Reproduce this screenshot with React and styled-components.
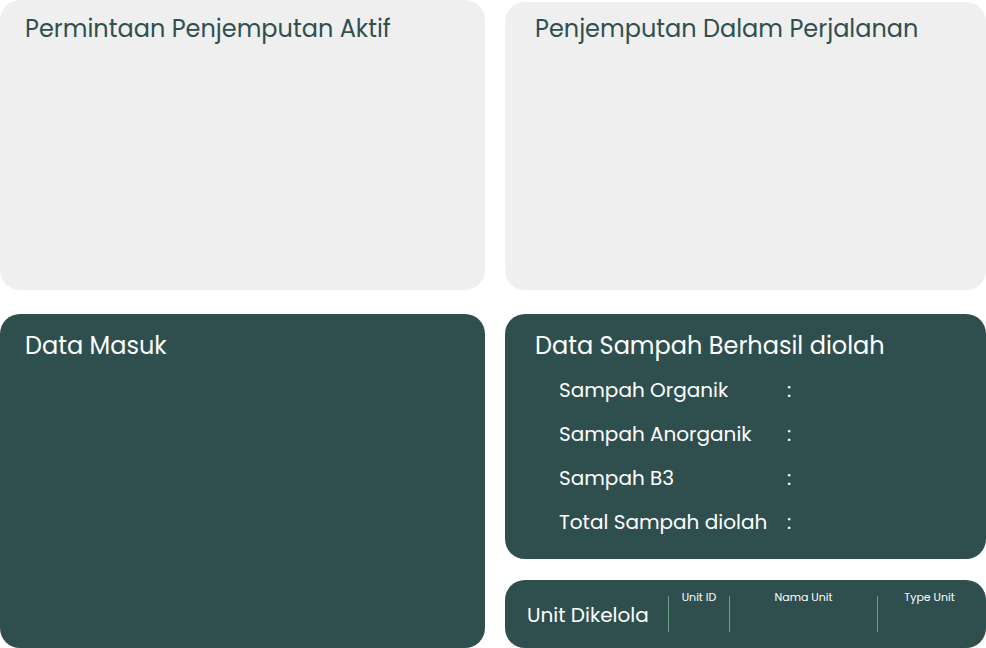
import React from "react";
import styled, { createGlobalStyle } from "styled-components";

const Global = createGlobalStyle`
  html, body { margin: 0; padding: 0; background: #ffffff; }
  body { font-family: "Poppins", "Open Sans", "Noto Sans", sans-serif; overflow: hidden; }
`;

const Page = styled.div`
  display: grid;
  grid-template-columns: 485px 481px;
  grid-template-rows: 290px 334px;
  column-gap: 20px;
  row-gap: 24px;
  width: 986px;
  height: 648px;
`;

const Card = styled.section`
  background: ${(p) => (p.$dark ? "#2f4f4f" : "#efefef")};
  color: ${(p) => (p.$dark ? "#ffffff" : "#2f4f4f")};
  border-radius: 20px;
  box-sizing: border-box;
  padding: ${(p) => p.$pad || "13px 25px"};
  margin-top: ${(p) => p.$mt || "0"};
`;

const Title = styled.h2`
  margin: 0;
  font-size: 24px;
  font-weight: 400;
  line-height: 32px;
`;

const RightStack = styled.div`
  display: flex;
  flex-direction: column;
  gap: 21px;
`;

const SampahCard = styled(Card)`
  height: 245px;
  padding: 16px 30px;
`;

const Rows = styled.div`
  display: grid;
  grid-template-columns: 228px auto;
  row-gap: 14px;
  padding-left: 24px;
  margin-top: 13px;
`;

const Label = styled.span`
  font-size: 20px;
  line-height: 30px;
`;

const UnitCard = styled(Card)`
  height: 68px;
  padding: 0 0 0 22px;
  display: flex;
  align-items: center;
`;

const UnitTitle = styled.span`
  font-size: 20px;
  width: 141px;
  margin-top: 2px;
`;

const ColWrap = styled.div`
  align-self: stretch;
  display: flex;
  padding: 16px 0;
  box-sizing: border-box;
`;

const Col = styled.div`
  width: ${(p) => p.$w}px;
  display: flex;
  justify-content: center;
  box-sizing: border-box;
  border-left: 1px solid #6f9f8c;
  font-size: 11px;
  line-height: 14px;
`;

const ColLabel = styled.span`
  margin-top: -6px;
`;

export default function App() {
  return (
    <>
      <Global />
      <Page>
        <Card>
          <Title>Permintaan Penjemputan Aktif</Title>
        </Card>
        <Card $mt="2px" $pad="11px 30px">
          <Title>Penjemputan Dalam Perjalanan</Title>
        </Card>
        <Card $dark $pad="16px 25px">
          <Title>Data Masuk</Title>
        </Card>
        <RightStack>
          <SampahCard $dark>
            <Title>Data Sampah Berhasil diolah</Title>
            <Rows>
              <Label>Sampah Organik</Label>
              <Label>:</Label>
              <Label>Sampah Anorganik</Label>
              <Label>:</Label>
              <Label>Sampah B3</Label>
              <Label>:</Label>
              <Label>Total Sampah diolah</Label>
              <Label>:</Label>
            </Rows>
          </SampahCard>
          <UnitCard $dark>
            <UnitTitle>Unit Dikelola</UnitTitle>
            <ColWrap>
              <Col $w={61}>
                <ColLabel>Unit ID</ColLabel>
              </Col>
              <Col $w={148}>
                <ColLabel>Nama Unit</ColLabel>
              </Col>
              <Col $w={104}>
                <ColLabel>Type Unit</ColLabel>
              </Col>
            </ColWrap>
          </UnitCard>
        </RightStack>
      </Page>
    </>
  );
}
